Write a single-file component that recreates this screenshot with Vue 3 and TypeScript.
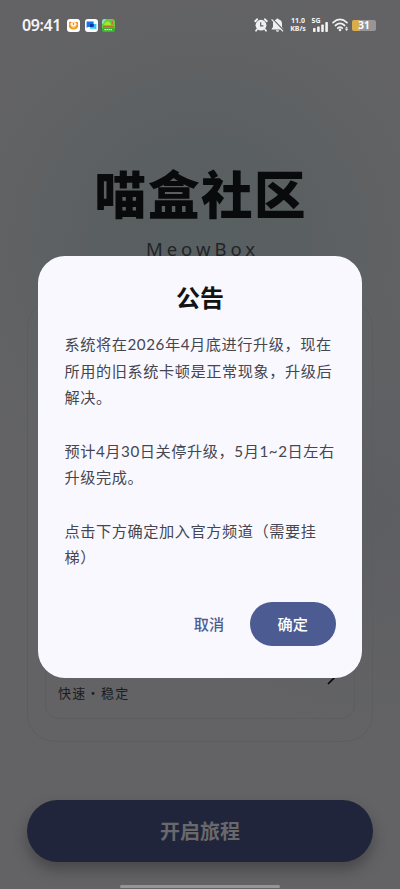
<script setup lang="ts">
interface Bar { x: number; h: number }
const bars: Bar[] = [
  { x: 0, h: 4 },
  { x: 4.1, h: 5.5 },
  { x: 8.2, h: 7.5 },
  { x: 12.3, h: 10 },
]
const paragraphs: string[][] = [
  ['系统将在2026年4月底进行升级，现在', '所用的旧系统卡顿是正常现象，升级后', '解决。'],
  ['预计4月30日关停升级，5月1~2日左右', '升级完成。'],
  ['点击下方确定加入官方频道（需要挂', '梯）'],
]
</script>

<template>
  <div class="screen">
    <header class="status">
      <span class="time">09:41</span>
      <div class="apps">
        <svg viewBox="0 0 13 13" class="app">
          <rect width="13" height="13" rx="3" fill="#fff" />
          <circle cx="3.2" cy="4" r="1.2" fill="#e98a1c" />
          <circle cx="9.8" cy="4" r="1.2" fill="#e98a1c" />
          <ellipse cx="6.5" cy="6.700" rx="4.700" ry="3.800" fill="#f29a22" />
          <ellipse cx="6.5" cy="5.2" rx="3" ry="1.900" fill="#fff8ea" />
          <circle cx="6.5" cy="5" r=".7" fill="#93501a" />
          <path d="M4 7.600q2.500 2 5 0z" fill="#fff" />
        </svg>
        <svg viewBox="0 0 13 13" class="app">
          <rect width="13" height="13" rx="3" fill="#fff" />
          <path d="M5 5h6.4v5.8L10 9.7H5z" fill="#35c8ef" />
          <path d="M1.6 2.5h7v5.4H3L1.6 9z" fill="#1673ea" />
          <path d="M5 5h3.6v2.9H5z" fill="#0939a2" />
        </svg>
        <svg viewBox="0 0 13 13" class="app">
          <rect width="13" height="13" rx="3" fill="#62cf3a" />
          <path d="M0 3a3 3 0 0 1 3-3h1L1 5H0z" fill="#8fd9d0" />
          <path d="M2 6q1-4 4-3.500t3 3.500z" fill="#a4e830" />
          <path d="M9.500 1.500h1.500v4H9.500z" fill="#d56b3c" />
          <path d="M1 7h11v1.500H1z" fill="#bd6a32" />
          <path d="M0 9h13v1a3 3 0 0 1-3 3H3a3 3 0 0 1-3-3z" fill="#37b42b" />
          <path d="M2.500 10.700h8" stroke="#dbf5be" stroke-width="1.300" stroke-dasharray="1.500 .5" />
        </svg>
      </div>
      <div class="system">
        <svg class="alarm" viewBox="0 0 14 14">
          <path d="M1.200 3.200 3.200 1.300M12.800 3.200 10.800 1.300" stroke="#f1f1f2" stroke-width="1.900" stroke-linecap="round" />
          <circle cx="7" cy="7.200" r="5.400" fill="#f1f1f2" />
          <path d="m3 11.300-1 1.500M11 11.300l1 1.500" stroke="#f1f1f2" stroke-width="1.700" stroke-linecap="round" />
          <path d="M6.700 4.300v3.500h2.700" fill="none" stroke="#606163" stroke-width="1.200" />
        </svg>
        <svg class="bell" viewBox="0 0 13 14">
          <path d="M6.500.5a1.200 1.200 0 0 1 1.200 1C10 2 11 3.700 11 5.800V9l1.300 1.700v.8H.7v-.8L2 9V5.800C2 3.700 3 2 5.300 1.500A1.200 1.200 0 0 1 6.500.5zM5 12.300h3a1.500 1.500 0 0 1-3 0z" fill="#f1f1f2" />
          <path d="M1.600.9 12.800 12.500" stroke="#606163" stroke-width="1.300" />
          <path d="M.6 1.400 12 13.300" stroke="#f1f1f2" stroke-width="1.200" />
        </svg>
        <div class="speed"><span>11.0</span><span>KB/s</span></div>
        <div class="signal">
          <span class="net">5G</span>
          <svg viewBox="0 0 15 10" class="bars">
            <rect v-for="b in bars" :key="b.x" :x="b.x" :y="10 - b.h" width="2.600" :height="b.h" rx=".8" fill="#f1f1f2" />
          </svg>
        </div>
        <svg class="wifi" viewBox="0 0 17 14">
          <g fill="none" stroke="#f1f1f2" stroke-width="1.700" stroke-linecap="round">
            <path d="M1 4.600Q8 -1.800 15 4.600" />
            <path d="M3.400 7.500Q8 3.300 12.600 7.500" />
            <path d="M5.700 10.200Q8 8.300 10.300 10.200" />
          </g>
          <circle cx="8" cy="12" r="1.300" fill="#f1f1f2" />
          <path d="m14.600 8.600 1.500 1.900h-3zM14.600 13l-1.500-1.900h3z" fill="#f1f1f2" />
        </svg>
        <div class="battery"><span>31</span></div>
      </div>
    </header>

    <main class="page">
      <h1>喵盒社区</h1>
      <p class="sub">MeowBox</p>
      <section class="card">
        <div class="option">
          <span>快速・稳定</span>
          <svg viewBox="0 0 8 14" class="chevron"><path d="m1 1 6 6-6 6" fill="none" stroke="#080809" stroke-width="1.700" /></svg>
        </div>
      </section>
      <button class="start">开启旅程</button>
    </main>
    <div class="handle"></div>

    <div class="dialog" role="dialog">
      <h2>公告</h2>
      <div class="copy">
        <p v-for="(lines, i) in paragraphs" :key="i">
          <span v-for="line in lines" :key="line">{{ line }}</span>
        </p>
      </div>
      <div class="actions">
        <button class="cancel">取消</button>
        <button class="confirm">确定</button>
      </div>
    </div>
  </div>
</template>

<style>
body { margin: 0; }
</style>

<style scoped>
* { box-sizing: border-box; }
h1, h2, p { margin: 0; }
button { border: 0; padding: 0; background: none; font: inherit; }
.screen {
  position: relative;
  display: flex;
  flex-direction: column;
  width: 400px;
  height: 889px;
  overflow: hidden;
  font-family: "Noto Sans CJK SC", sans-serif;
  background:
    radial-gradient(circle at 200px 245px, #586061 0, #5a5f61 100px, rgba(93, 97, 99, .7) 170px, rgba(99, 99, 101, 0) 260px),
    radial-gradient(circle at 370px 510px, #5d5e62 0, rgba(99, 99, 101, 0) 230px),
    #636365;
}
.status {
  display: flex;
  align-items: center;
  height: 50px;
  padding: 0 24px 0 22px;
  color: #f4f4f5;
  flex: none;
}
.time { width: 45px; font: 600 16px/20px "Noto Sans", sans-serif; white-space: nowrap; letter-spacing: -.4px; }
.apps { display: flex; gap: 4.500px; }
.app { width: 13px; height: 13px; display: block; }
.system { display: flex; align-items: center; margin-left: auto; }
.alarm { width: 14px; height: 14px; }
.bell { width: 13px; height: 14px; margin-left: 3px; }
.speed {
  display: flex;
  flex-direction: column;
  align-items: center;
  width: 18px;
  margin-left: 5px;
  font: 700 7px/8px "Noto Sans", sans-serif;
}
.speed span { height: 8px; overflow: hidden; }
.signal { display: flex; flex-direction: column; width: 17px; margin-left: 4.500px; }
.net { font: 700 7px/8px "Noto Sans", sans-serif; height: 6px; margin-top: -2px; }
.bars { width: 15px; height: 10px; margin-left: 1px; margin-top: -1px; }
.wifi { width: 17px; height: 14px; margin-left: 3px; }
.battery {
  display: flex;
  justify-content: center;
  align-items: center;
  width: 24px;
  height: 11px;
  margin-left: 3.500px;
  border-radius: 2px;
  background: linear-gradient(90deg, #d9ad4c 0 33%, #969698 33%);
  font: 700 10px/11px "Noto Sans", sans-serif;
  color: #fff;
}
.page { display: flex; flex-direction: column; align-items: center; padding: 0 27px; }
h1 {
  margin-top: 102px;
  padding-left: 2px;
  font-size: 51.500px;
  line-height: 80px;
  letter-spacing: 1.600px;
  font-weight: 900;
  color: #090a0b;
}
.sub {
  margin-top: 4px;
  padding-left: 5px;
  font: 400 18.500px/26px "Noto Sans", sans-serif;
  letter-spacing: 4px;
  color: #222427;
}
.card {
  display: flex;
  align-items: flex-end;
  width: 346px;
  height: 442px;
  margin-top: 38px;
  padding: 0 17px 22px;
  border: 1px solid #5c5d5f;
  border-radius: 28px;
}
.option {
  display: flex;
  align-items: flex-end;
  justify-content: space-between;
  width: 100%;
  height: 110px;
  padding: 0 19px 15px 12px;
  border: 1px solid #5c5d5f;
  border-radius: 13px;
  font-size: 13px;
  line-height: 20px;
  letter-spacing: 1.300px;
  color: #1c1c1f;
}
.chevron { width: 8px; height: 14px; margin-bottom: 18px; }
.start {
  width: 346px;
  height: 62px;
  margin-top: 58px;
  padding-bottom: 1px;
  border-radius: 31px;
  background: #20253b;
  box-shadow: 0 8px 14px rgba(32, 32, 34, .4);
  color: #69696b;
  font-size: 20px;
  font-weight: 700;
}
.handle {
  position: absolute;
  left: 120px;
  bottom: 1px;
  width: 160px;
  height: 3px;
  border-radius: 2px;
  background: #959597;
}
.dialog {
  position: absolute;
  left: 37.500px;
  top: 255.500px;
  width: 324.500px;
  height: 422.500px;
  padding: 23px 26.500px 31px 27px;
  border-radius: 27px;
  background: #f9f8ff;
}
h2 { font-size: 24px; line-height: 36px; font-weight: 700; text-align: center; color: #131316; }
.copy { display: flex; flex-direction: column; gap: 26.700px; margin-top: 16.400px; }
.copy span {
  display: block;
  font-family: Lato, "Noto Sans CJK SC", sans-serif;
  font-size: 15.200px;
  line-height: 26.700px;
  letter-spacing: .56px;
  color: #45464f;
  white-space: nowrap;
}
.actions { display: flex; justify-content: flex-end; margin-top: 30.600px; font-size: 15.200px; font-weight: 500; letter-spacing: .3px; }
.actions button { padding-bottom: 2px; }
.cancel { width: 82px; height: 44.500px; color: #4c5c92; }
.confirm { width: 85.500px; height: 44.500px; border-radius: 23px; background: #4c5c92; color: #fff; }
</style>
